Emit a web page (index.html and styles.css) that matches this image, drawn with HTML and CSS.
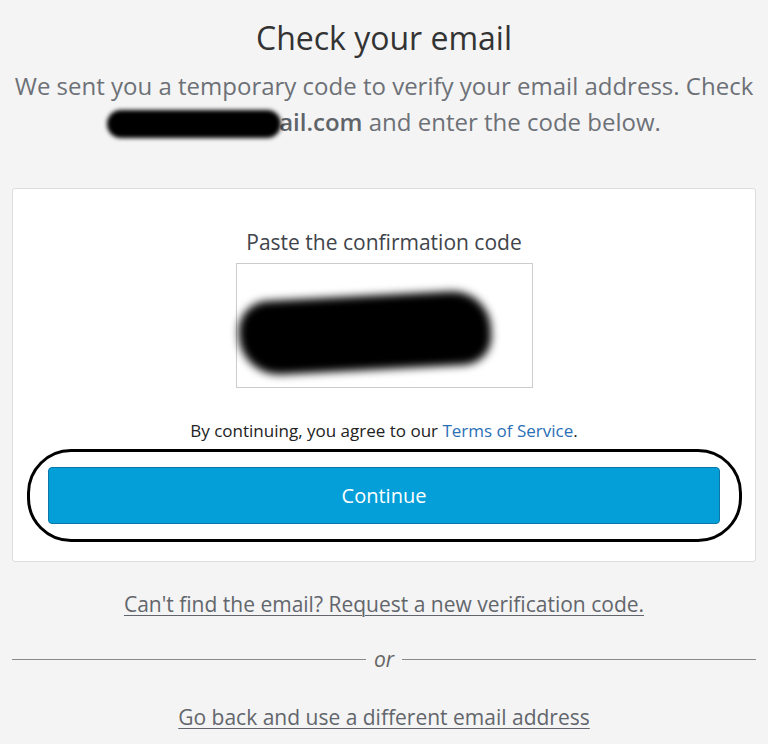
FILE: index.html
```html
<!DOCTYPE html>
<html lang="en">
<head>
<meta charset="utf-8">
<title>Check your email</title>
<link rel="stylesheet" href="styles.css">
</head>
<body>
<main class="page">
  <h1 class="title">Check your email</h1>
  <p class="lead">We sent you a temporary code to verify your email address. Check<br><span class="redact-inline"></span><strong class="email">ail.com</strong> and enter the code below.</p>

  <section class="card">
    <label class="code-label" for="code">Paste the confirmation code</label>
    <div class="code-box" id="code">
      <span class="redact-code"></span>
    </div>
    <p class="terms">By continuing, you agree to our <a href="#" class="terms-link">Terms of Service</a>.</p>
    <div class="focus-ring">
      <button class="btn" type="button">Continue</button>
    </div>
  </section>

  <a href="#" class="sub-link resend">Can't find the email? Request a new verification code.</a>

  <div class="divider"><span class="line"></span><span class="or">or</span><span class="line"></span></div>

  <a href="#" class="sub-link back">Go back and use a different email address</a>
</main>
</body>
</html>
```

FILE: styles.css
```css
* { box-sizing: border-box; }
html, body { margin: 0; padding: 0; }
body {
  background: #f4f4f4;
  font-family: "Open Sans", "Noto Sans", sans-serif;
  color: #3d4148;
}
.page {
  width: 768px;
  padding: 14px 12px 0 12px;
  display: flex;
  flex-direction: column;
  align-items: center;
}
.title {
  margin: 0;
  font-size: 32px;
  font-weight: 400;
  line-height: 48px;
  color: #333;
}
.lead {
  margin: 6px -12px 0 -12px;
  width: 768px;
  font-size: 24px;
  line-height: 36px;
  color: #6d7177;
  text-align: center;
}
.redact-inline {
  display: inline-block;
  width: 174px;
  height: 28px;
  background: #000;
  border-radius: 14px;
  filter: blur(2px);
  vertical-align: -7px;
  margin-right: -2px;
}
.email { font-weight: 600; color: #5f636a; }
.card {
  margin-top: 48px;
  width: 744px;
  background: #fff;
  border: 1px solid #ddd;
  border-radius: 3px;
  padding: 40px 12px 19px 12px;
  display: flex;
  flex-direction: column;
  align-items: center;
}
.code-label {
  font-size: 21px;
  line-height: 26px;
  color: #40444b;
}
.code-box {
  margin-top: 8px;
  width: 297px;
  height: 125px;
  border: 1px solid #ccc;
  display: flex;
  align-items: center;
  padding-left: 2px;
}
.redact-code {
  display: block;
  width: 252px;
  height: 74px;
  background: #000;
  border-radius: 30px 38px 28px 40px;
  filter: blur(4px);
  margin-top: 14px;
  transform: rotate(-3deg);
}
.terms {
  margin: 32px 0 0 0;
  font-size: 17px;
  line-height: 22px;
  color: #222;
}
.terms-link { color: #2b6fb6; text-decoration: none; }
.focus-ring {
  margin-top: 7px;
  width: 715px;
  height: 93px;
  border: 3px solid #000;
  border-radius: 44px;
  display: flex;
  align-items: center;
  justify-content: center;
}
.btn {
  width: 672px;
  height: 57px;
  background: #049fd9;
  border: 1px solid #0b77a8;
  border-radius: 4px;
  color: #fff;
  font-family: "Open Sans", "Noto Sans", sans-serif;
  font-size: 20px;
  cursor: pointer;
}
.sub-link {
  font-size: 21px;
  line-height: 28px;
  color: #62666c;
  text-decoration: underline;
  text-decoration-thickness: 1px;
  text-underline-offset: 3px;
}
.resend { margin-top: 28px; }
.divider {
  margin-top: 28px;
  width: 744px;
  display: flex;
  align-items: center;
  gap: 8px;
}
.line { flex: 1; height: 1px; background: #8a8a8a; }
.or {
  font-style: italic;
  font-size: 21px;
  line-height: 26px;
  color: #666;
}
.back { margin-top: 31px; }
```
